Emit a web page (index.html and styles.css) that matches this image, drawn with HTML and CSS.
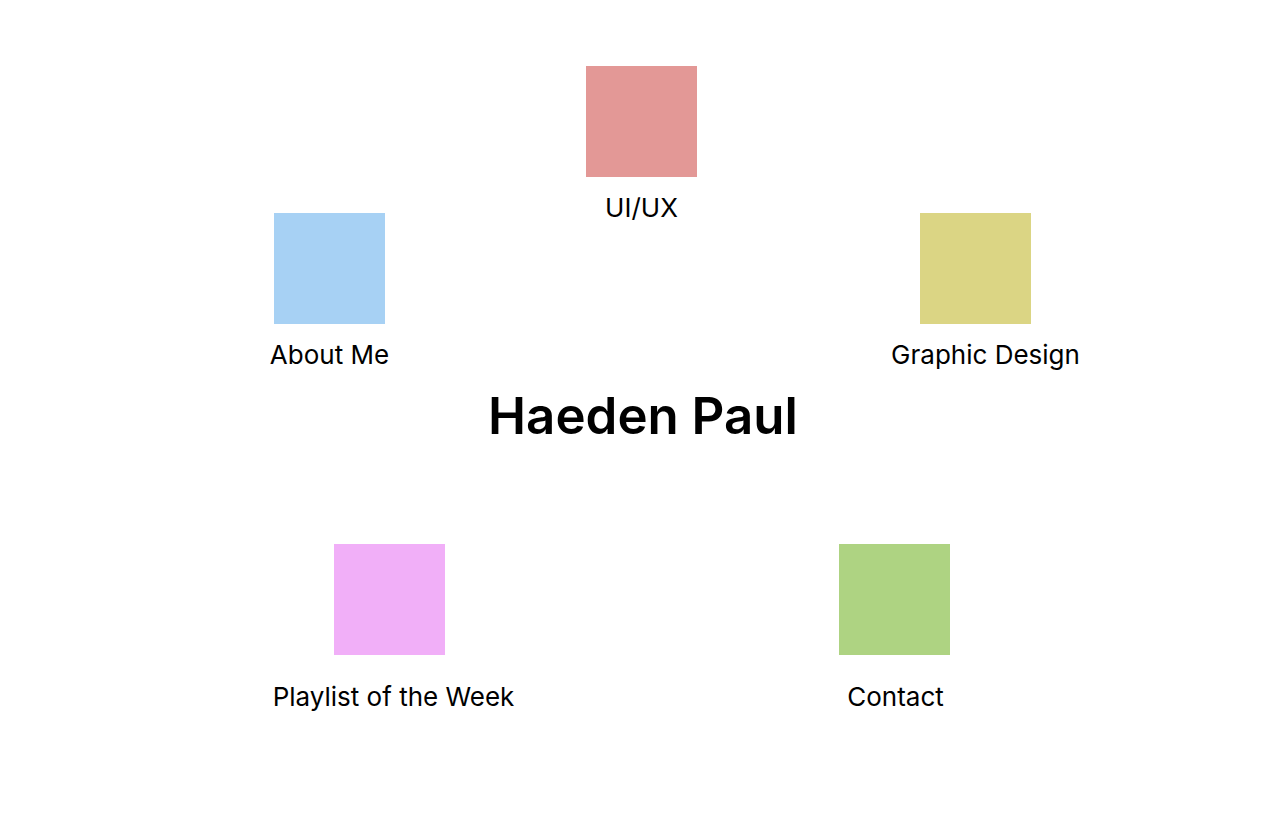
FILE: index.html
```html
<!DOCTYPE html>
<html lang="en">
<head>
    <meta charset="UTF-8">
    <meta name="viewport" content="width=device-width, initial-scale=1.0">
    <title>Haeden Paul</title>
    <link rel="stylesheet" href="styles.css">
</head>
<body>
    <div class="canvas">
        <a class="node node-uiux" href="#">
            <div class="tile"></div>
            <span class="label">UI/UX</span>
        </a>

        <a class="node node-about" href="#">
            <div class="tile"></div>
            <span class="label">About Me</span>
        </a>

        <a class="node node-graphic" href="#">
            <div class="tile"></div>
            <span class="label">Graphic Design</span>
        </a>

        <h1 class="name">Haeden Paul</h1>

        <a class="node node-playlist" href="#">
            <div class="tile"></div>
            <span class="label">Playlist of the Week</span>
        </a>

        <a class="node node-contact" href="#">
            <div class="tile"></div>
            <span class="label">Contact</span>
        </a>
    </div>
</body>
</html>
```

FILE: styles.css
```css
body {
    margin: 0;
    background-color: #ffffff;
    font-family: Inter, "Noto Sans", sans-serif;
    color: #000000;
}
.canvas {
    position: relative;
    width: 100%;
    height: 100vh;
    min-height: 834px;
    overflow: hidden;
}
.node {
    position: absolute;
    width: 111px;
    display: flex;
    flex-direction: column;
    align-items: center;
    color: inherit;
    text-decoration: none;
}
.tile {
    width: 111px;
    height: 111px;
}
.label {
    margin-top: 15px;
    font-size: 26px;
    line-height: 31px;
    white-space: nowrap;
}
.node-uiux {
    left: 586px;
    top: 66px;
}
.node-uiux .tile {
    background-color: #e39896;
}
.node-about {
    left: 274px;
    top: 213px;
}
.node-about .tile {
    background-color: #a7d1f4;
}
.node-graphic {
    left: 920px;
    top: 213px;
}
.node-graphic .tile {
    background-color: #dbd584;
}
.node-graphic .label {
    margin-left: 20px;
}
.node-playlist {
    left: 334px;
    top: 544px;
}
.node-playlist .tile {
    background-color: #f1aff8;
}
.node-playlist .label {
    margin-top: 26px;
    margin-left: 8px;
}
.node-contact {
    left: 839px;
    top: 544px;
}
.node-contact .tile {
    background-color: #aed382;
}
.node-contact .label {
    margin-top: 26px;
    margin-left: 2px;
}
.name {
    position: absolute;
    left: 0;
    right: 0;
    top: 385px;
    margin: 0;
    text-align: center;
    font-size: 51px;
    line-height: 62px;
    font-weight: 600;
}
```
